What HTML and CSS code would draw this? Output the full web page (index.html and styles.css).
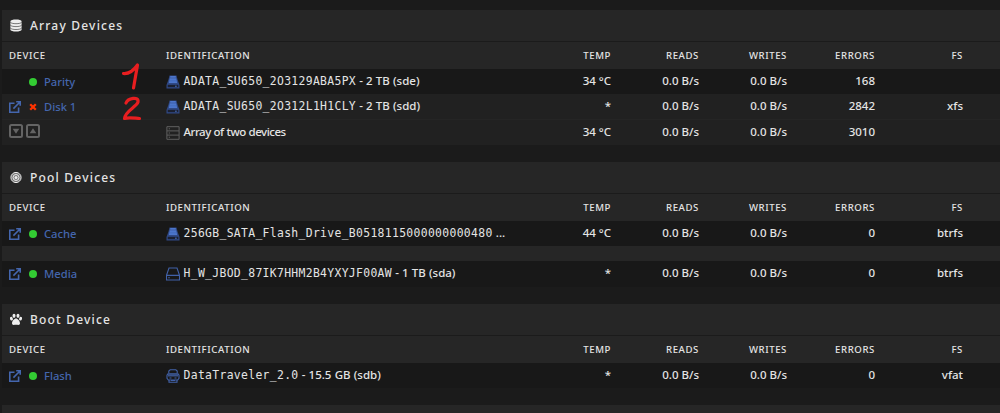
FILE: index.html
```html
<!DOCTYPE html>
<html lang="en">
<head>
<meta charset="utf-8">
<title>Main</title>
<link rel="stylesheet" href="styles.css">
</head>
<body>
<svg class="defs" aria-hidden="true">
  <symbol id="open" viewBox="0 0 12 12"><path d="M5.500 2.300H.8v8.900H9.600V6.600M7.200.8h4v4M11 1 4.400 7.600" fill="none" stroke="currentColor" stroke-width="1.600"/></symbol>
  <symbol id="ssd" viewBox="0 0 14 14"><path d="M3.500.5h7l1 4L13.500 10v3.500H.5V10l2-5.500z" fill="#304985"/><path d="M4.200 1h5.600v1.800H4.200zM3.800 3.300h6.400l1 4.700H2.800z" fill="#4c76cc"/><path d="M3.300 5.800h7.400" stroke="#3e66b5" stroke-width=".6"/><path d="M1.700 9.800h10.600v2.400H1.700z" fill="#1b2030"/><path d="M9 11.200h1.800" stroke="#4970bd"/></symbol>
  <symbol id="hdd" viewBox="0 0 14 14"><path d="M3 1h8l2.500 7.200v4.800H.5V8.200zM.6 8.400h12.800M2.200 10.800h1.600" fill="none" stroke="currentColor" stroke-width="1.100"/></symbol>
  <symbol id="server" viewBox="0 0 14 14"><path d="M.9.700h12.200v12.600H.9zM1 4.900h12M1 9.100h12M2.700 2.800h1.300M2.700 7h1.300M2.700 11.200h1.300" fill="none" stroke="currentColor"/></symbol>
  <symbol id="usb" viewBox="0 0 14 14"><path d="M2.800 4V2L4.200.8h5.600L11.200 2v2M2 4.700h10l1 1.500v3L11.700 11H2.300L1 9.200v-3zM3 11v2.300h8V11" fill="none" stroke="currentColor" stroke-width="1.100"/><path d="M2 5.200h10v2.300H2z" fill="currentColor" opacity=".8"/><path d="M3.500 9h2M8.500 9h2M5 11.500h4" stroke="currentColor"/></symbol>
  <symbol id="down" viewBox="0 0 14 14"><rect x="1" y="1" width="12" height="12" rx="1.500" fill="none" stroke="currentColor" stroke-width="2"/><path d="M3.700 4.800h6.600L7 9.800z" fill="currentColor"/></symbol>
  <symbol id="up" viewBox="0 0 14 14"><rect x="1" y="1" width="12" height="12" rx="1.500" fill="none" stroke="currentColor" stroke-width="2"/><path d="M3.700 9.200h6.600L7 4.200z" fill="currentColor"/></symbol>
  <symbol id="cross" viewBox="0 0 8 8"><path d="m1.200 1.200 5.600 5.600m0-5.600L1.200 6.800" fill="none" stroke="currentColor" stroke-width="2.300"/></symbol>
</svg>
<main>
<section>
  <h2><svg viewBox="0 0 12 13"><path d="M.4 2.200C.4-.2 11.600-.2 11.600 2.200v8.600c0 2.400-11.200 2.400-11.200 0z" fill="currentColor"/><path d="M.3 3.200c1 2 10.400 2 11.400 0M.3 6.100c1 2 10.400 2 11.400 0M.3 9c1 2 10.400 2 11.400 0" fill="none" stroke="#262626" stroke-width=".6"/></svg><span>Array Devices</span></h2>
  <div class="row head"><b>DEVICE</b><b>IDENTIFICATION</b><b>TEMP</b><b>READS</b><b>WRITES</b><b>ERRORS</b><b>FS</b></div>
  <div class="row dark"><div class="dev"><i></i><i class="dot"></i><a>Parity</a></div><div class="id"><svg><use href="#ssd"/></svg><span><code>ADATA_SU650_2O3129ABA5PX</code> - 2 TB (sde)</span></div><span>34 °C</span><span>0.0 B/s</span><span>0.0 B/s</span><span>168</span><span></span></div>
  <div class="row"><div class="dev"><svg><use href="#open"/></svg><svg class="cross"><use href="#cross"/></svg><a>Disk 1</a></div><div class="id"><svg><use href="#ssd"/></svg><span><code>ADATA_SU650_2O312L1H1CLY</code> - 2 TB (sdd)</span></div><span>*</span><span>0.0 B/s</span><span>0.0 B/s</span><span>2842</span><span>xfs</span></div>
  <div class="row total"><div class="toggles"><svg><use href="#down"/></svg><svg><use href="#up"/></svg></div><div class="id gray"><svg><use href="#server"/></svg><span>Array of two devices</span></div><span>34 °C</span><span>0.0 B/s</span><span>0.0 B/s</span><span>3010</span><span></span></div>
</section>
<section>
  <h2><svg viewBox="0 0 12 12"><circle cx="6" cy="6" r="5" fill="#777"/><g fill="none" stroke="currentColor"><circle cx="6" cy="6" r="5.100"/><circle cx="6" cy="6" r="3"/></g><circle cx="6" cy="6" r="1.500" fill="currentColor"/></svg><span>Pool Devices</span></h2>
  <div class="row head"><b>DEVICE</b><b>IDENTIFICATION</b><b>TEMP</b><b>READS</b><b>WRITES</b><b>ERRORS</b><b>FS</b></div>
  <div class="row dark"><div class="dev"><svg><use href="#open"/></svg><i class="dot"></i><a>Cache</a></div><div class="id"><svg><use href="#ssd"/></svg><span><code>256GB_SATA_Flash_Drive_B0518115000000000480</code> ...</span></div><span>44 °C</span><span>0.0 B/s</span><span>0.0 B/s</span><span>0</span><span>btrfs</span></div>
  <div class="gap"></div>
  <div class="row dark"><div class="dev"><svg><use href="#open"/></svg><i class="dot"></i><a>Media</a></div><div class="id"><svg><use href="#hdd"/></svg><span><code>H_W_JBOD_87IK7HHM2B4YXYJF00AW</code> - 1 TB (sda)</span></div><span>*</span><span>0.0 B/s</span><span>0.0 B/s</span><span>0</span><span>btrfs</span></div>
</section>
<section>
  <h2><svg viewBox="0 0 12 12"><g fill="currentColor"><ellipse cx="4" cy="2.300" rx="1.500" ry="2.100"/><ellipse cx="8" cy="2.300" rx="1.500" ry="2.100"/><ellipse cx="1.400" cy="5.200" rx="1.400" ry="1.900" transform="rotate(-20 1.400 5.200)"/><ellipse cx="10.600" cy="5.200" rx="1.400" ry="1.900" transform="rotate(20 10.600 5.200)"/><path d="M6 5C4.300 5 2 7.800 2 9.600c0 2.700 2.400 1.600 4 1.600s4 1.100 4-1.600C10 7.800 7.700 5 6 5z"/></g></svg><span>Boot Device</span></h2>
  <div class="row head"><b>DEVICE</b><b>IDENTIFICATION</b><b>TEMP</b><b>READS</b><b>WRITES</b><b>ERRORS</b><b>FS</b></div>
  <div class="row dark"><div class="dev"><svg><use href="#open"/></svg><i class="dot"></i><a>Flash</a></div><div class="id"><svg><use href="#usb"/></svg><span><code>DataTraveler_2.0</code> - 15.5 GB (sdb)</span></div><span>*</span><span>0.0 B/s</span><span>0.0 B/s</span><span>0</span><span>vfat</span></div>
</section>
<div class="next"></div>
</main>
<svg class="marks" viewBox="0 0 24 60"><path d="M3.500 12.500C9 13 14 9 17.500 4L13.500 27M6 42c2-5 13-7 12-1C16.500 46 5 50 4.500 57.500c4-1.500 9-.5 15 0" fill="none" stroke="#e81e20" stroke-width="3.200" stroke-linecap="round" stroke-linejoin="round"/></svg>
</body>
</html>
```
FILE: styles.css
```css
* { box-sizing: border-box; }
body {
  margin: 0;
  height: 413px;
  overflow: hidden;
  background: #1b1b1b;
  color: #e4e4e4;
  font: 500 11.5px/16px "Noto Sans", sans-serif;
}
.defs { position: absolute; width: 0; height: 0; }
main { padding: 10px 0 0 2px; }
section { margin-bottom: 17px; }
h2 {
  display: flex;
  align-items: center;
  gap: 8px;
  height: 32px;
  margin: 0;
  padding-left: 8px;
  background: #262626;
  border-bottom: 1px solid #1b1b1b;
  font-size: 12px;
  font-weight: 500;
  letter-spacing: 1.200px;
}
h2 svg { width: 12px; height: 13px; color: #eee; }
.row {
  display: grid;
  grid-template-columns: 157px 357px 88px 88px 88px 88px 88px;
  padding-left: 7px;
  align-items: center;
  height: 25px;
  background: #212121;
  white-space: nowrap;
}
.row > :nth-child(n+3) { text-align: right; }
.row > span, .id span { padding-bottom: 2px; }
.head { height: 27px; background: #262626; }
.head b { font-size: 9.600px; font-weight: 500; letter-spacing: .6px; }
.dark { background: #181818; }
.total { height: 26px; border-top: 1px solid #252525; }
.toggles { padding-bottom: 3px; }
.gap { height: 15px; background: #262626; }
.gap + .row { height: 26px; }
.next { height: 8px; background: #262626; }
.dev { display: grid; grid-template-columns: 19.500px 15.500px 1fr; align-items: center; color: #4466ae; font-size: 11.200px; }
.dev svg { width: 12px; height: 12px; }
.dev .cross { width: 8px; height: 8px; color: #ff3300; }
.dot { width: 8px; height: 8px; border-radius: 50%; background: #33cc33; }
.id { display: flex; align-items: center; color: #e4e4e4; word-spacing: .2px; }
.id svg { width: 14px; height: 14px; margin-right: 3.500px; color: #4161a8; }
.id.gray { letter-spacing: -.47px; }
.id.gray svg { color: #606060; }
code { font: 11.400px/16px "DejaVu Sans Mono", monospace; letter-spacing: .33px; }
.toggles { display: flex; gap: 3px; color: #646464; }
.toggles svg { width: 14px; height: 14px; }
.marks { position: absolute; left: 120px; top: 61px; width: 24px; height: 60px; }
```
